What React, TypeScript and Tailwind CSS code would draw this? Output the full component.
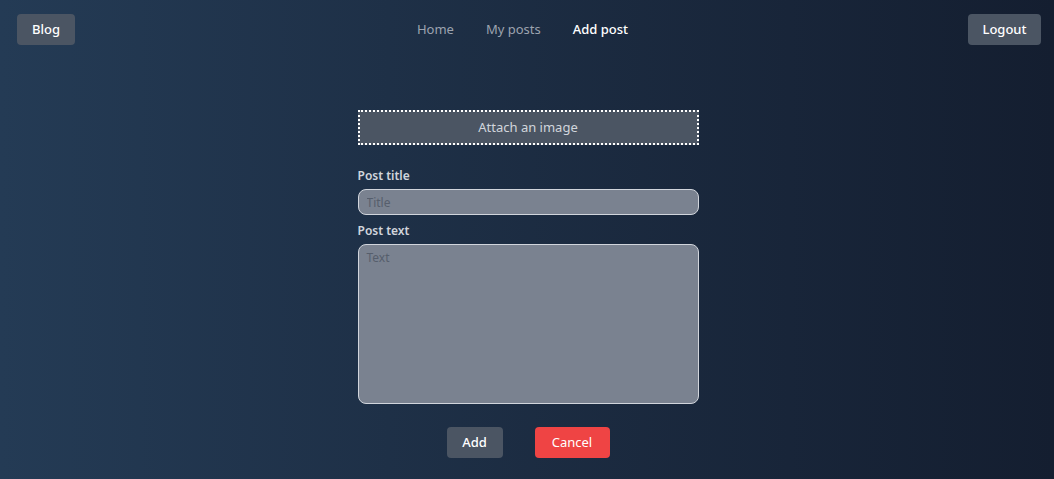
export default function App() {
  return (
    <div className="min-h-screen w-full bg-gradient-to-r from-[#243b55] to-[#141e30] font-['Noto_Sans',sans-serif]">
      <nav className="flex items-center justify-between pl-[17px] pr-[13px] pt-[14px]">
        <button className="h-[31px] w-[58px] rounded-sm bg-[#4b5563] text-[13px] font-medium text-white">
          Blog
        </button>
        <div className="ml-[2px] flex items-center gap-8 text-[13px]">
          <a className="text-[#9ca3af]">Home</a>
          <a className="text-[#9ca3af]">My posts</a>
          <a className="font-medium text-white">Add post</a>
        </div>
        <button className="h-[31px] w-[73px] rounded-sm bg-[#4b5563] text-[13px] font-medium text-white">
          Logout
        </button>
      </nav>

      <div className="mt-[65px] flex justify-center pl-[2px]">
        <form className="flex w-[341px] flex-col">
          <label className="flex h-[35px] cursor-pointer items-center justify-center border-2 border-dotted border-white bg-[#4b5563] text-[13px] text-gray-300">
            Attach an image
          </label>

          <label className="mt-[23px] text-[12px] font-semibold leading-4 text-gray-300">Post title</label>
          <input
            type="text"
            placeholder="Title"
            className="mt-[5px] h-[26px] w-full rounded-lg border border-gray-300 bg-[#7a8290] px-2 text-[12px] text-black outline-none placeholder:text-[#565e6c]"
          />

          <label className="mt-[8px] text-[12px] font-semibold leading-4 text-gray-300">Post text</label>
          <textarea
            placeholder="Text"
            className="mt-[5px] h-[160px] w-full resize-none rounded-lg border border-gray-300 bg-[#7a8290] px-2 py-1 text-[12px] text-black outline-none placeholder:text-[#565e6c]"
          />

          <div className="mt-[23px] flex items-center justify-center gap-8">
            <button className="h-[31px] w-[56px] rounded-sm bg-[#4b5563] text-[13px] font-medium text-white">
              Add
            </button>
            <button className="h-[31px] w-[75px] rounded-sm bg-[#ef4444] text-[13px] text-white">
              Cancel
            </button>
          </div>
        </form>
      </div>
    </div>
  );
}
